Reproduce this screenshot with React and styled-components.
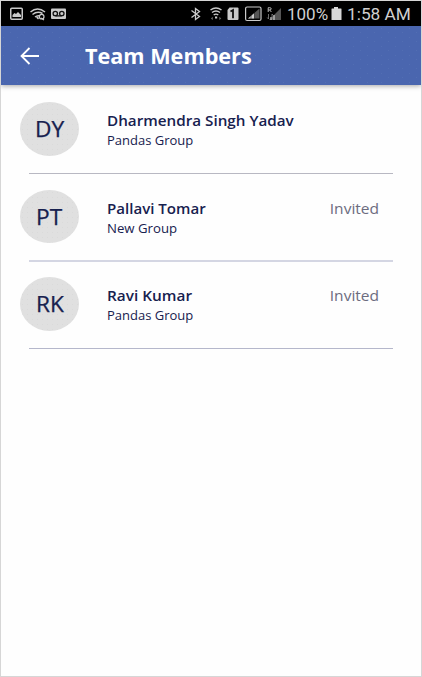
import React from 'react';
import styled, { createGlobalStyle } from 'styled-components';

const GlobalStyle = createGlobalStyle`
  * { box-sizing: border-box; }
  body { margin: 0; background: #fefefe; }
`;

const Screen = styled.div`
  width: 422px;
  height: 677px;
  border: 1px solid #d6d6d6;
  background: #fefefe;
  overflow: hidden;
  font-family: 'Open Sans', 'Noto Sans', sans-serif;
  color: #17214f;
`;

const StatusBar = styled.div`
  display: flex;
  align-items: center;
  height: 25px;
  background: #000;
  color: #d0d0d0;
  font: 17px/25px Roboto, sans-serif;
`;

const StatusIcons = styled.svg`
  display: block;
  flex: none;
  height: 25px;
  width: ${(p) => p.$width}px;
  margin-left: ${(p) => p.$left || 0}px;
`;

const StatusText = styled.span`
  flex: none;
  display: block;
  width: ${(p) => p.$width}px;
  margin-left: ${(p) => p.$left}px;
  white-space: nowrap;
  padding-top: 2px;
`;

const Header = styled.header`
  display: flex;
  align-items: center;
  height: 59px;
  padding-left: 18px;
  background-color: #4a66af;
  background-image: radial-gradient(circle at 2.5px 2.5px, #526eb3 0.7px, transparent 1px),
    radial-gradient(circle at 9.5px 6.5px, #526eb3 0.7px, transparent 1px);
  background-size: 14px 9px;
  box-shadow: 0 1px 5px rgba(0, 0, 0, 0.35);
`;

const BackButton = styled.button`
  display: flex;
  width: 66px;
  height: 20px;
  padding: 0;
  border: 0;
  background: none;
`;

const Stretch = styled.span`
  display: block;
  width: max-content;
  white-space: nowrap;
  transform: scaleX(${(p) => p.$x});
  transform-origin: ${(p) => p.$origin || 'left'} center;
`;

const Title = styled.h1`
  margin: 0;
  font-size: 21px;
  line-height: 30px;
  font-weight: 700;
  color: #fff;
`;

const List = styled.ul`
  list-style: none;
  margin: 0;
  padding: 0 28px 0 19px;
`;

const Row = styled.li`
  display: flex;
  flex-direction: column;
  height: ${(p) => p.$height}px;
  padding-top: ${(p) => p.$top}px;
`;

const Member = styled.div`
  display: flex;
  flex: 1;
  align-items: flex-start;
`;

const Avatar = styled.div`
  display: flex;
  align-items: center;
  justify-content: center;
  width: 59px;
  height: ${(p) => p.$height}px;
  margin-right: 28px;
  border-radius: 50%;
  background-color: #e0e0e0;
  background-image: radial-gradient(circle at 2.5px 2.5px, #dadada 0.7px, transparent 1px);
  background-size: 5px 5px;
  font-size: 21px;
  line-height: 30px;
  -webkit-text-stroke: 0.25px #17214f;
`;

const Details = styled.div`
  flex: 1;
  padding-top: 8px;
`;

const Name = styled.div`
  font-size: 15px;
  line-height: 21px;
  font-weight: 600;
`;

const Group = styled.div`
  font-size: 13px;
  line-height: 18px;
`;

const Status = styled.div`
  padding: 8px 14px 0 0;
  font-size: 14.5px;
  line-height: 21px;
  color: #6c6c7e;
`;

const Divider = styled.div`
  flex: none;
  height: ${(p) => p.$thickness}px;
  margin-left: 9px;
  background: ${(p) => p.$color};
`;

const members = [
  { initials: 'DY', name: 'Dharmendra Singh Yadav', group: 'Pandas Group', nameX: 1.015, groupX: 1, avatar: 54, height: 89, top: 17, line: 1, color: '#b8b8c2' },
  { initials: 'PT', name: 'Pallavi Tomar', group: 'New Group', status: 'Invited', nameX: 1.005, groupX: 1.015, avatar: 53, height: 88, top: 16, line: 2, color: '#d4d6e3' },
  { initials: 'RK', name: 'Ravi Kumar', group: 'Pandas Group', status: 'Invited', nameX: 1.025, groupX: 1, avatar: 54, height: 87, top: 15, line: 1, color: '#b5b7cb' },
];

function NotificationIcons() {
  return (
    <StatusIcons $width={70} viewBox="1 1 70 25" fill="none" stroke="#cacaca">
      <rect x="10.75" y="8.25" width="11.5" height="11" rx="1" strokeWidth="1.5" />
      <path d="M12.5 17v-2l2-2 1.5 1 2-2 3 3v2z" fill="#cacaca" stroke="none" />
      <path d="M30.5 12q7-6 14.5 0M32.5 14.500q5-4 10-1M35 17q2.500-2 5-1" strokeWidth="1.500" />
      <path d="M36 17.500l2-1 1 2-1 1z" fill="#cacaca" stroke="none" />
      <circle cx="41.700" cy="16.700" r="2.300" strokeWidth="1.200" />
      <path d="M41 18l3 2" strokeWidth="1.200" />
      <rect x="51" y="8.500" width="15" height="10.500" rx="1" fill="#cacaca" stroke="none" />
      <g stroke="#111" strokeWidth="1.300">
        <circle cx="55.300" cy="13.500" r="2.200" />
        <circle cx="61.800" cy="13.500" r="2.200" />
        <path d="M55.300 15.900h6.500" />
      </g>
    </StatusIcons>
  );
}

function RadioIcons() {
  return (
    <StatusIcons $width={96} $left={117} viewBox="188 1 96 25" fill="none" stroke="#cacaca">
      <path d="M191.500 10.500l8 6-4 3v-11l4 3-8 6" strokeWidth="1.300" />
      <path d="M210.500 10q5.500-4 11 0" strokeWidth="1.500" />
      <path d="M212 12.500q4-3 8 0M213.700 15q2.300-1.800 4.600 0" strokeWidth="1.400" />
      <path d="M215 16.500h2.200v2h-2.200z" fill="#cacaca" stroke="none" />
      <path d="M210.800 18.500l2-1.800v3.200zM221.300 18.500l-2-1.800v3.200z" fill="#666" stroke="none" />
      <path d="M229.500 7.500h8q1 0 1 1v10.500q0 1-1 1h-9q-1 0-1-1v-9z" fill="#cacaca" stroke="none" />
      <path d="M230.500 11.500l2.500-1.500v8.200" stroke="#111" strokeWidth="1.800" />
      <rect x="245.600" y="7" width="15.400" height="13.500" rx="1.500" strokeWidth="1.200" />
      <path d="M248 18.500L259.500 8.500v10z" fill="#555" stroke="none" />
      <path d="M248 18.500l6.500-5.600v5.600z" fill="#cacaca" stroke="none" />
      <path d="M251 14v5M254.500 11v8" stroke="#111" strokeWidth=".6" />
      <path d="M269 20L281 8v12z" fill="#555" stroke="none" />
      <path d="M271 20v-3M274 20v-5" strokeWidth="1.200" />
      <path d="M268.200 12V7.700h1.600q1.400 0 1.400 1.100t-1.400 1.100h-1.500M269.700 10l1.700 2" strokeWidth=".9" />
      <path d="M268.500 14v5l-1.300-1.500M272 19v-5l1.300 1.500" stroke="#888" strokeWidth=".8" />
    </StatusIcons>
  );
}

function BatteryIcon() {
  return (
    <StatusIcons $width={12} $left={0} viewBox="331 1 12 25" fill="#d8d8d8">
      <path d="M335 7h4v1.500h3q.5 0 .5.500v11h-10V9q0-.500.500-.500h2z" />
    </StatusIcons>
  );
}

export default function App() {
  return (
    <Screen>
      <GlobalStyle />
      <StatusBar>
        <NotificationIcons />
        <RadioIcons />
        <StatusText $left={3} $width={43}>100%</StatusText>
        <BatteryIcon />
        <StatusText $left={5} $width={66}><Stretch $x={1.015}>1:58 AM</Stretch></StatusText>
      </StatusBar>
      <Header>
        <BackButton aria-label="Back">
          <svg width="22" height="20" viewBox="0 0 22 20" fill="none" stroke="#fff" strokeWidth="1.800">
            <path d="M20 10H2.500M10.500 2L2.500 10l8 8" />
          </svg>
        </BackButton>
        <Title><Stretch $x={1.03}>Team Members</Stretch></Title>
      </Header>
      <List>
        {members.map((m) => (
          <Row key={m.name} $height={m.height} $top={m.top}>
            <Member>
              <Avatar $height={m.avatar}><Stretch $x={1.08} $origin="center">{m.initials}</Stretch></Avatar>
              <Details>
                <Name><Stretch $x={m.nameX}>{m.name}</Stretch></Name>
                <Group><Stretch $x={m.groupX}>{m.group}</Stretch></Group>
              </Details>
              {m.status && <Status><Stretch $x={1.07} $origin="right">{m.status}</Stretch></Status>}
            </Member>
            <Divider $thickness={m.line} $color={m.color} />
          </Row>
        ))}
      </List>
    </Screen>
  );
}
